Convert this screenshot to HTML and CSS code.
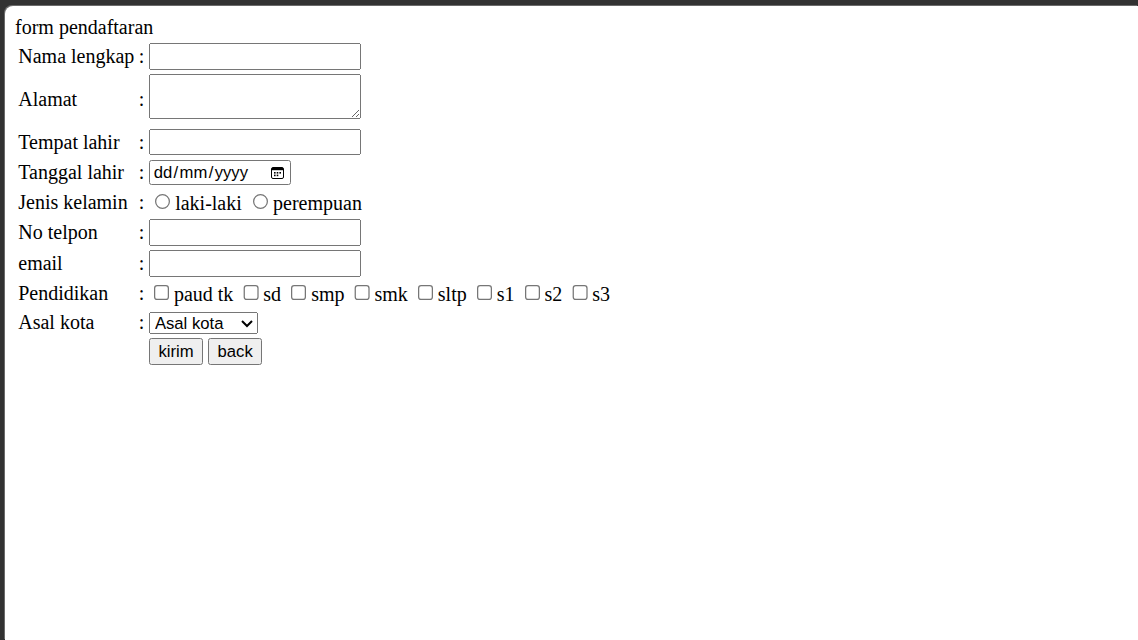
FILE: index.html
```html
<!DOCTYPE html>
<html>
<head>
<meta charset="utf-8">
<title>form pendaftaran</title>
<link rel="stylesheet" href="styles.css">
</head>
<body>
<div class="viewport">
  <div class="page">
    <form class="form">
      form pendaftaran
      <table class="grid">
        <tr>
          <td>Nama lengkap</td><td>:</td>
          <td><input class="field" type="text"></td>
        </tr>
        <tr>
          <td>Alamat</td><td>:</td>
          <td><textarea class="area"></textarea></td>
        </tr>
        <tr>
          <td>Tempat lahir</td><td>:</td>
          <td><input class="field" type="text"></td>
        </tr>
        <tr>
          <td>Tanggal lahir</td><td>:</td>
          <td><span class="date" tabindex="0"><span class="date-text"><span>dd</span><span class="sep">/</span><span>mm</span><span class="sep">/</span><span>yyyy</span></span><svg class="cal" viewBox="0 0 13 13" width="10.4" height="10.4"><rect x="0.5" y="1.5" width="12" height="11" rx="1.5" fill="none" stroke="#000" stroke-width="1"/><rect x="1" y="2" width="11" height="2.2" fill="#000"/><rect x="3" y="6" width="1.6" height="1.6" fill="#000"/><rect x="5.7" y="6" width="1.6" height="1.6" fill="#000"/><rect x="8.4" y="6" width="1.6" height="1.6" fill="#000"/><rect x="3" y="8.6" width="1.6" height="1.6" fill="#000"/><rect x="5.7" y="8.6" width="1.6" height="1.6" fill="#000"/></svg></span></td>
        </tr>
        <tr>
          <td>Jenis kelamin</td><td>:</td>
          <td><input type="radio" name="jk">laki-laki <input type="radio" name="jk">perempuan</td>
        </tr>
        <tr>
          <td>No telpon</td><td>:</td>
          <td><input class="field" type="text"></td>
        </tr>
        <tr>
          <td>email</td><td>:</td>
          <td><input class="field" type="text"></td>
        </tr>
        <tr>
          <td>Pendidikan</td><td>:</td>
          <td><input type="checkbox">paud tk <input type="checkbox">sd <input type="checkbox">smp <input type="checkbox">smk <input type="checkbox">sltp <input type="checkbox">s1 <input type="checkbox">s2 <input type="checkbox">s3</td>
        </tr>
        <tr>
          <td>Asal kota</td><td>:</td>
          <td><select class="city"><option>Asal kota</option><option>Jakarta</option><option>Bandung</option><option>Surabaya</option></select></td>
        </tr>
        <tr>
          <td></td><td></td>
          <td class="actions"><input class="btn" type="submit" value="kirim"> <input class="btn" type="reset" value="back"></td>
        </tr>
      </table>
    </form>
  </div>
</div>
</body>
</html>
```

FILE: styles.css
```css
html, body {
  margin: 0;
  padding: 0;
}
body {
  background: #323232;
  height: 640px;
  overflow: hidden;
}
.viewport {
  margin: 6px 0 0 5px;
  height: 634px;
  background: #ffffff;
  border-top-left-radius: 8px;
  box-shadow: -1px -1px 0 #6a6a6a;
}
.page {
  zoom: 1.25;
  padding: 8px;
  font-family: "Liberation Serif", "Times New Roman", serif;
  font-size: 16px;
  color: #000;
}
.form {
  margin: 0;
}
.grid {
  border-spacing: 2px;
  font-size: 16px;
  margin-top: 0.8px;
}
.grid td {
  padding: 1px;
}
.field, .area, .date, .city, .btn {
  font-family: "Liberation Sans", Arial, sans-serif;
  font-size: 13.333px;
}
.field {
  box-sizing: border-box;
  width: 169.6px;
  height: 21.2px;
}
.area {
  box-sizing: border-box;
  width: 169.6px;
  height: 36px;
}
.date {
  box-sizing: border-box;
  display: inline-flex;
  align-items: center;
  justify-content: space-between;
  width: 113.6px;
  height: 20.2px;
  padding: 0 4.4px 0 3px;
  border: 1px solid #767676;
  border-radius: 2px;
  background: #fff;
  color: #000;
  vertical-align: baseline;
}
.date-text {
  display: inline-flex;
  white-space: nowrap;
}
.sep {
  margin: 0 1.1px;
}
.cal {
  flex: none;
  display: block;
}
.city {
  box-sizing: border-box;
  width: 87.2px;
  height: 17.6px;
}
```
